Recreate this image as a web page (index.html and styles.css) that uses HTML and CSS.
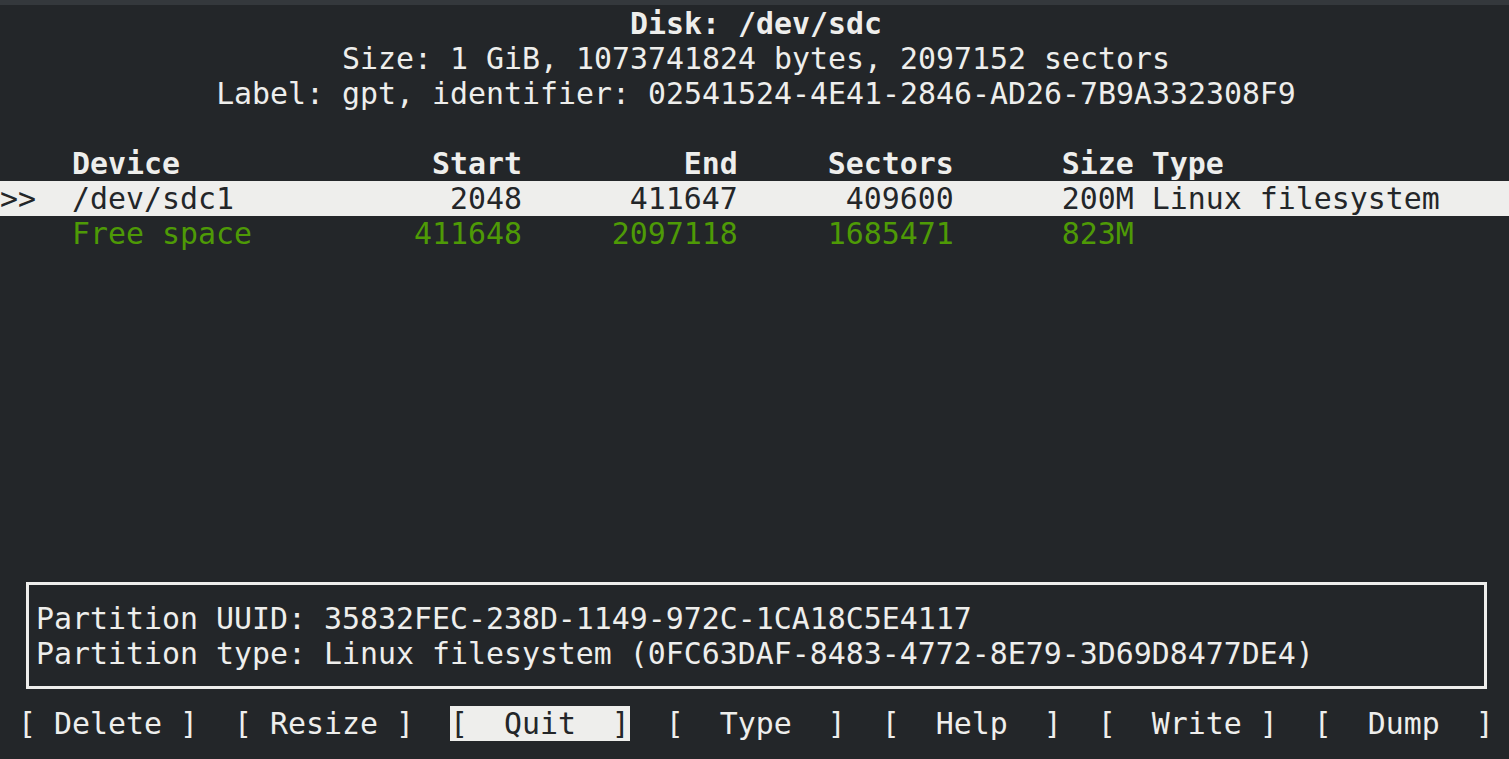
FILE: index.html
```html
<!DOCTYPE html>
<html>
<head>
<meta charset="utf-8">
<link rel="stylesheet" href="styles.css">
</head>
<body>
<div class="topbar"></div>
<div class="term">
  <div class="line center bold">Disk: /dev/sdc</div>
  <div class="line center">Size: 1 GiB, 1073741824 bytes, 2097152 sectors</div>
  <div class="line center">Label: gpt, identifier: 02541524-4E41-2846-AD26-7B9A332308F9</div>
  <div class="line"> </div>
  <div class="line bold">    Device              Start         End     Sectors      Size Type</div>
  <div class="line selected">&gt;&gt;  /dev/sdc1            2048      411647      409600      200M Linux filesystem</div>
  <div class="line free">    Free space         411648     2097118     1685471      823M</div>
  <div class="spacer"></div>
  <div class="infobox">
    <div class="line">Partition UUID: 35832FEC-238D-1149-972C-1CA18C5E4117</div>
    <div class="line">Partition type: Linux filesystem (0FC63DAF-8483-4772-8E79-3D69D8477DE4)</div>
  </div>
  <div class="line"> [ Delete ]  [ Resize ]  <span class="active">[  Quit  ]</span>  [  Type  ]  [  Help  ]  [  Write ]  [  Dump  ]</div>
</div>
</body>
</html>
```
FILE: styles.css
```css
html, body {
  margin: 0;
  padding: 0;
  background: #232629;
  overflow: hidden;
}
body {
  width: 1509px;
  height: 759px;
}
.topbar {
  height: 5px;
  background: #34383c;
}
.term {
  width: 1512px;
  padding-top: 1px;
  font-family: "DejaVu Sans Mono", monospace;
  font-size: 29.9px;
  line-height: 35px;
  color: #eeeeec;
}
.line {
  height: 35px;
  white-space: pre;
}
.center {
  text-align: center;
}
.bold {
  font-weight: bold;
}
.selected {
  background: #eeeeec;
  color: #232629;
}
.free {
  color: #4e9a06;
}
.spacer {
  height: 315px;
}
.infobox {
  margin: 16px 25px 17px 26px;
  border: 3px solid #eeeeec;
  padding: 16px 0 15px 7px;
}
.active {
  background: #eeeeec;
  color: #232629;
}
```
